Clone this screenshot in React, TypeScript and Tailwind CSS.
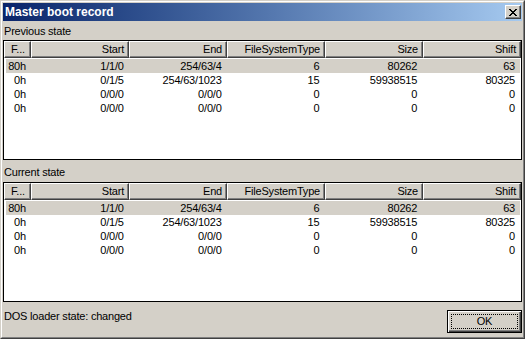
import React from "react";

const rows = [
  ["80h", "1/1/0", "254/63/4", "6", "80262", "63"],
  ["0h", "0/1/5", "254/63/1023", "15", "59938515", "80325"],
  ["0h", "0/0/0", "0/0/0", "0", "0", "0"],
  ["0h", "0/0/0", "0/0/0", "0", "0", "0"],
];

const columns = ["F...", "Start", "End", "FileSystemType", "Size", "Shift"];

const CloseGlyph = () => (
  <svg width="8" height="7" viewBox="0 0 8 7" shapeRendering="crispEdges">
    <path
      d="M0 0h2v1H0zM6 0h2v1H6zM1 1h2v1H1zM5 1h2v1H5zM2 2h4v1H2zM3 3h2v1H3zM2 4h4v1H2zM1 5h2v1H1zM5 5h2v1H5zM0 6h2v1H0zM6 6h2v1H6z"
      fill="#000"
    />
  </svg>
);

const PartitionList = () => {
  return (
    <div className="h-[120px] border border-black bg-white flex flex-col overflow-hidden">
      <div className="flex h-[17px] shrink-0">
        {columns.map((col, i) => (
          <div
            key={col}
            className={`${i === 0 ? "w-[27px] justify-start pl-[6px]" : "w-[98px] justify-end pr-[4px]"} flex items-center h-full bg-[#d4d0c8] border-t border-l border-t-white border-l-white border-r border-b border-r-[#404040] border-b-[#404040] shadow-[inset_-1px_-1px_0_#808080] leading-[13px] whitespace-nowrap overflow-hidden`}
          >
            {col}
          </div>
        ))}
      </div>
      <div className="pt-px">
        {rows.map((row, r) => (
          <div
            key={r}
            className={`flex h-[14px] items-center ml-[2px] mr-px ${r === 0 ? "bg-[#d4d0c8]" : ""}`}
          >
            {row.map((cell, c) => (
              <div
                key={c}
                className={`${c === 0 ? "w-[25px]" : "w-[98px]"} text-right pr-[5px] leading-[13px] whitespace-nowrap`}
              >
                {cell}
              </div>
            ))}
          </div>
        ))}
      </div>
    </div>
  );
};

export default function App() {
  return (
    <div className="w-[525px] h-[339px] bg-[#d4d0c8] border border-t-[#d4d0c8] border-l-[#d4d0c8] border-r-[#404040] border-b-[#404040] font-['Liberation_Sans',Arial,sans-serif] text-[11px] tracking-[-0.2px] text-black">
      <div className="h-full border border-t-white border-l-white border-r-[#808080] border-b-[#808080] p-px">
        <div className="flex flex-col h-full">
          <div className="h-[18px] shrink-0 flex items-center justify-between bg-gradient-to-r from-[#0a246a] to-[#a6caf0] pl-[2px] pr-[1px]">
            <span className="text-white font-bold text-[12px] tracking-normal leading-[14px]">
              Master boot record
            </span>
            <button className="w-[16px] h-[14px] flex items-center justify-center bg-[#d4d0c8] border border-t-white border-l-white border-r-[#404040] border-b-[#404040] shadow-[inset_-1px_-1px_0_#808080]">
              <CloseGlyph />
            </button>
          </div>

          <div className="h-[19px] shrink-0 flex items-center pl-px pt-px leading-[13px]">
            Previous state
          </div>
          <PartitionList />

          <div className="h-[22px] shrink-0 flex items-center pl-px pt-[3px] leading-[13px]">
            Current state
          </div>
          <PartitionList />

          <div className="flex-1 flex items-start justify-between pt-[8px]">
            <span className="pl-px leading-[13px]">DOS loader state: changed</span>
            <button className="w-[75px] h-[23px] border border-black bg-[#d4d0c8] shadow-[inset_1px_1px_0_#fff,inset_-1px_-1px_0_#404040,inset_-2px_-2px_0_#808080] p-[3px]">
              <div className="w-full h-full border border-dotted border-black flex items-center justify-center leading-[13px]">
                OK
              </div>
            </button>
          </div>
        </div>
      </div>
    </div>
  );
}
